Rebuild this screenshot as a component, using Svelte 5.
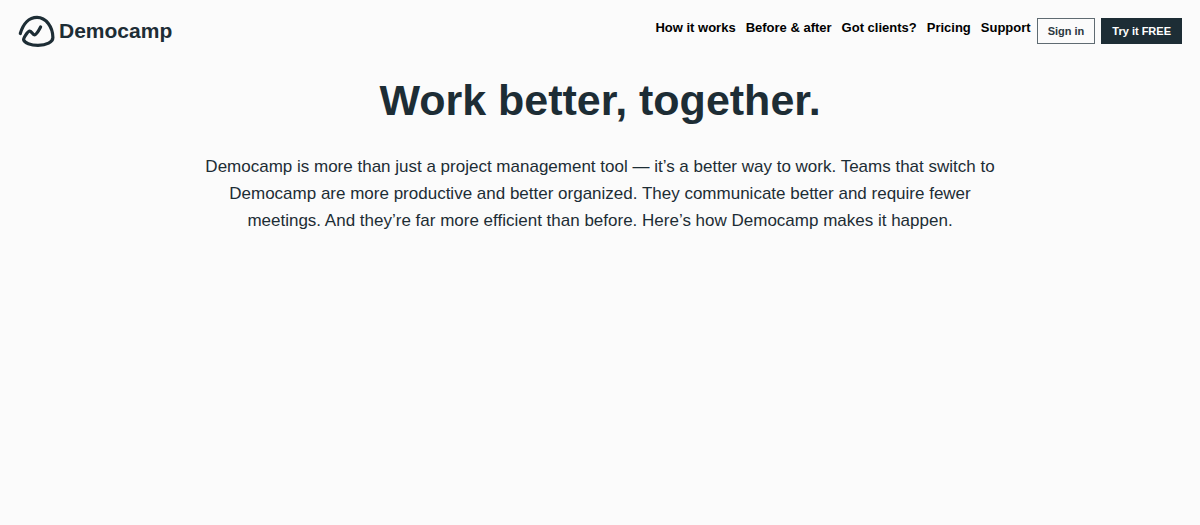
<script>
  const links = ['How it works', 'Before & after', 'Got clients?', 'Pricing', 'Support'];
</script>

<header>
  <a class="brand" href="#home">
    <svg width="38" height="34" viewBox="0 0 38 34" fill="none" stroke="#1d2d35" stroke-width="3.2" stroke-linecap="round" stroke-linejoin="round" aria-hidden="true">
      <path d="M2.300 19.500C5 10 11 3.300 19 3.300C28 3.300 34.800 13 34.900 23.500C34.900 28 28.500 31.300 20 31.300C12.500 31.300 6.500 28.800 5.600 25.800C5.200 24.500 9.500 17.400 11.500 17C13.300 16.700 14.500 20.800 16.400 20.800C18.500 20.800 20.800 16.500 22.600 13" />
    </svg>
    <span>Democamp</span>
  </a>
  <nav>
    <div class="links">
      {#each links as link}
        <a href="#top">{link}</a>
      {/each}
    </div>
    <button class="btn">Sign in</button>
    <button class="btn solid">Try it FREE</button>
  </nav>
</header>

<main>
  <h1>Work better, together.</h1>
  <p>Democamp is more than just a project management tool — it’s a better way to work. Teams that switch to Democamp are more productive and better organized. They communicate better and require fewer meetings. And they’re far more efficient than before. Here’s how Democamp makes it happen.</p>
</main>

<style>
  :global(body) {
    background: #fbfbfb;
    color: #1d2d35;
    font-family: 'Liberation Sans', Arial, sans-serif;
  }
  header {
    display: flex;
    justify-content: space-between;
    align-items: flex-start;
    padding: 15px 18px 0;
  }
  a {
    color: inherit;
    text-decoration: none;
  }
  .brand {
    display: flex;
    align-items: center;
    gap: 3px;
    height: 32px;
    font-size: 21px;
    font-weight: bold;
  }
  nav {
    display: flex;
    gap: 6px;
    padding-top: 3px;
  }
  .links {
    display: flex;
    gap: 10px;
    color: #000;
    font-size: 13px;
    font-weight: bold;
    line-height: 20px;
  }
  .btn {
    height: 26px;
    padding: 0 10px;
    border: 1px solid #5f6b72;
    background: transparent;
    color: #2b3840;
    font: bold 11px 'Liberation Sans', Arial, sans-serif;
  }
  .solid {
    border-color: #1d2d35;
    background: #1d2d35;
    color: #fff;
  }
  main {
    max-width: 800px;
    margin: 0 auto;
    padding: 25px 10px;
    text-align: center;
  }
  h1 {
    margin: 0;
    font-size: 43px;
    line-height: 56px;
  }
  p {
    margin: 25px 0 0;
    font-size: 17px;
    line-height: 27px;
  }
</style>
